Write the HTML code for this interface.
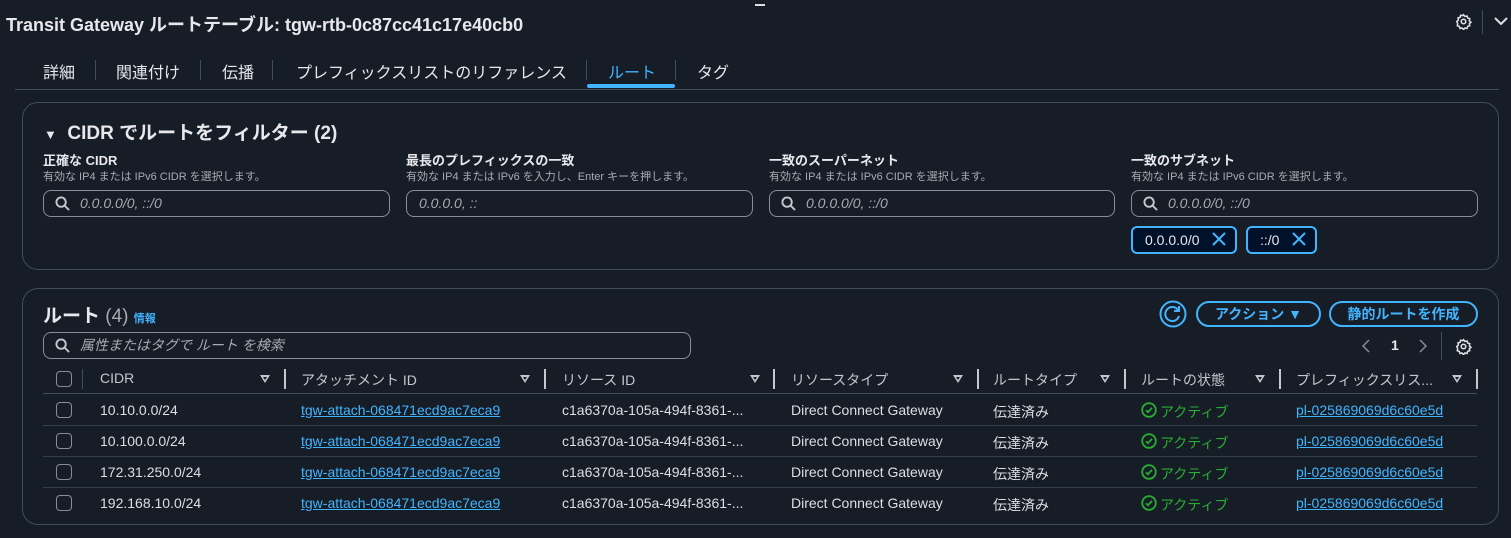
<!DOCTYPE html>
<html><head><meta charset="utf-8"><style>
*{box-sizing:border-box;margin:0;padding:0}
body{width:1511px;height:538px;background:#161d26;color:#dedee3;font-family:"Liberation Sans","Noto Sans CJK JP",sans-serif;font-size:14px;position:relative;overflow:hidden}
.a{position:absolute;white-space:nowrap}
.panel{position:absolute;border:1px solid #414d5c;border-radius:16px}
.inp{position:absolute;height:27px;border:1px solid #8c8c94;border-radius:8px;color:#a7abb2;font-style:italic;font-size:14px;line-height:25px}
.lbl{font-weight:bold;font-size:13px;color:#e8e8ec}
.sub{font-size:11px;color:#a7abb2}
.tab{font-size:16px;color:#e8e8ec}
.tsep{position:absolute;width:1px;height:20px;background:#414d5c;top:60px}
.hd{font-size:14px;color:#c6c6cd}
.hsep{position:absolute;top:369px;width:2px;height:20px;background:#c6c6cd}
.tri{position:absolute;top:375px;width:0;height:0;border-left:5px solid transparent;border-right:5px solid transparent;border-top:8px solid #c6c6cd}
.tri::after{content:"";position:absolute;left:-2px;top:-6px;border-left:2px solid transparent;border-right:2px solid transparent;border-top:3px solid #161d26}
.cb{position:absolute;left:56px;width:16px;height:16px;border:1.5px solid #8c8c94;border-radius:4px}
.row{position:absolute;left:43px;width:1434px;height:1px;background:#353f4c}
.lnk{color:#42b4ff;text-decoration:underline}
.grn{color:#29ad32}
.btn{position:absolute;height:26px;border:2px solid #42b4ff;border-radius:14px;color:#42b4ff;font-weight:bold;font-size:14px;line-height:22px;text-align:center}
.tok{position:absolute;top:226px;height:28px;border:2px solid #42b4ff;border-radius:6px;background:#001129;color:#e8e8ec;font-size:14px;line-height:24px;padding-left:12px}
</style></head><body>
<div class="a" style="left:6px;top:11px;font-size:18px;font-weight:bold;color:#e8e8ec">Transit Gateway ルートテーブル: tgw-rtb-0c87cc41c17e40cb0</div>
<div class="a" style="left:755px;top:4px;width:10px;height:2px;background:#dedee3"></div>
<svg class="a" style="left:1455px;top:13px" width="17" height="17" viewBox="0 0 24 24" fill="none" stroke="#dedee3" stroke-width="2.2"><circle cx="12" cy="12" r="3.2"/><path d="M12 2.5l2 2.3 3-.6.9 2.9 2.9.9-.6 3 2.3 2-2.3 2 .6 3-2.9.9-.9 2.9-3-.6-2 2.3-2-2.3-3 .6-.9-2.9-2.9-.9.6-3L2.5 12l2.3-2-.6-3 2.9-.9.9-2.9 3 .6z"/></svg>
<div class="a" style="left:1482px;top:10px;width:1px;height:24px;background:#414d5c"></div>
<svg class="a" style="left:1494px;top:16px" width="14" height="10" viewBox="0 0 14 10" fill="none" stroke="#dedee3" stroke-width="2"><path d="M1 2l6 6 6-6"/></svg>

<div class="a tab" style="left:43px;top:59px">詳細</div>
<div class="tsep" style="left:95px"></div>
<div class="a tab" style="left:116px;top:59px">関連付け</div>
<div class="tsep" style="left:200px"></div>
<div class="a tab" style="left:222px;top:59px">伝播</div>
<div class="tsep" style="left:272px"></div>
<div class="a tab" style="left:296px;top:59px">プレフィックスリストのリファレンス</div>
<div class="tsep" style="left:586px"></div>
<div class="a tab" style="left:608px;top:59px;color:#42b4ff">ルート</div>
<div class="a" style="left:587px;top:84px;width:88px;height:4px;border-radius:2px;background:#42b4ff"></div>
<div class="tsep" style="left:675px"></div>
<div class="a tab" style="left:697px;top:59px">タグ</div>
<div class="a" style="left:15px;top:89px;width:1484px;height:1px;background:#414d5c"></div>

<div class="panel" style="left:22px;top:102px;width:1477px;height:168px"></div>
<div class="a" style="left:44px;top:118px;font-size:19px;font-weight:bold;color:#e8e8ec"><span style="font-size:13px">▼</span>&nbsp; CIDR でルートをフィルター (2)</div>

<div class="a lbl" style="left:43px;top:150px">正確な CIDR</div>
<div class="a sub" style="left:43px;top:168px">有効な IP4 または IPv6 CIDR を選択します。</div>
<div class="inp" style="left:43px;top:190px;width:347px;padding-left:36px">0.0.0.0/0, ::/0</div>
<div class="a lbl" style="left:406px;top:150px">最長のプレフィックスの一致</div>
<div class="a sub" style="left:406px;top:168px">有効な IP4 または IPv6 を入力し、Enter キーを押します。</div>
<div class="inp" style="left:406px;top:190px;width:347px;padding-left:12px">0.0.0.0, ::</div>
<div class="a lbl" style="left:769px;top:150px">一致のスーパーネット</div>
<div class="a sub" style="left:769px;top:168px">有効な IP4 または IPv6 CIDR を選択します。</div>
<div class="inp" style="left:769px;top:190px;width:346px;padding-left:36px">0.0.0.0/0, ::/0</div>
<div class="a lbl" style="left:1131px;top:150px">一致のサブネット</div>
<div class="a sub" style="left:1131px;top:168px">有効な IP4 または IPv6 CIDR を選択します。</div>
<div class="inp" style="left:1131px;top:190px;width:347px;padding-left:36px">0.0.0.0/0, ::/0</div>
<svg class="a" style="left:55px;top:196px" width="15" height="15" viewBox="0 0 16 16" fill="none" stroke="#c6c6cd" stroke-width="2"><circle cx="6.5" cy="6.5" r="5"/><path d="M10 10l5 5"/></svg>
<svg class="a" style="left:781px;top:196px" width="15" height="15" viewBox="0 0 16 16" fill="none" stroke="#c6c6cd" stroke-width="2"><circle cx="6.5" cy="6.5" r="5"/><path d="M10 10l5 5"/></svg>
<svg class="a" style="left:1143px;top:196px" width="15" height="15" viewBox="0 0 16 16" fill="none" stroke="#c6c6cd" stroke-width="2"><circle cx="6.5" cy="6.5" r="5"/><path d="M10 10l5 5"/></svg>
<div class="tok" style="left:1131px;width:106px">0.0.0.0/0</div>
<svg class="a" style="left:1212px;top:232px" width="14" height="14" viewBox="0 0 14 14" stroke="#42b4ff" stroke-width="2"><path d="M1 1l12 12M13 1L1 13"/></svg>
<div class="tok" style="left:1246px;width:71px">::/0</div>
<svg class="a" style="left:1292px;top:232px" width="14" height="14" viewBox="0 0 14 14" stroke="#42b4ff" stroke-width="2"><path d="M1 1l12 12M13 1L1 13"/></svg>

<div class="panel" style="left:22px;top:288px;width:1477px;height:237px"></div>
<div class="a" style="left:43px;top:301px;font-size:19px;font-weight:bold;color:#e8e8ec">ルート <span style="font-weight:normal;color:#a7abb2">(4)</span> <span style="font-size:11px;color:#42b4ff">情報</span></div>
<svg class="a" style="left:1159px;top:300px" width="28" height="28" viewBox="0 0 28 28" fill="none" stroke="#42b4ff" stroke-width="2"><circle cx="14" cy="14" r="12.5"/><path d="M19 10a7 7 0 1 0 1 6"/><path d="M20 6v5h-5"/></svg>
<div class="btn" style="left:1196px;top:301px;width:125px">アクション ▼</div>
<div class="btn" style="left:1329px;top:301px;width:149px">静的ルートを作成</div>
<div class="inp" style="left:43px;top:332px;width:648px;padding-left:36px">属性またはタグで ルート を検索</div>
<svg class="a" style="left:55px;top:338px" width="15" height="15" viewBox="0 0 16 16" fill="none" stroke="#c6c6cd" stroke-width="2"><circle cx="6.5" cy="6.5" r="5"/><path d="M10 10l5 5"/></svg>
<svg class="a" style="left:1362px;top:339px" width="9" height="14" viewBox="0 0 9 14" fill="none" stroke="#8c8c94" stroke-width="1.5"><path d="M7 1L1 7l6 6"/></svg>
<div class="a" style="left:1391px;top:337px;font-weight:bold;color:#e8e8ec">1</div>
<svg class="a" style="left:1418px;top:339px" width="9" height="14" viewBox="0 0 9 14" fill="none" stroke="#8c8c94" stroke-width="1.5"><path d="M2 1l6 6-6 6"/></svg>
<div class="a" style="left:1441px;top:332px;width:1px;height:28px;background:#414d5c"></div>
<svg class="a" style="left:1455px;top:338px" width="17" height="17" viewBox="0 0 24 24" fill="none" stroke="#dedee3" stroke-width="2.2"><circle cx="12" cy="12" r="3.2"/><path d="M12 2.5l2 2.3 3-.6.9 2.9 2.9.9-.6 3 2.3 2-2.3 2 .6 3-2.9.9-.9 2.9-3-.6-2 2.3-2-2.3-3 .6-.9-2.9-2.9-.9.6-3L2.5 12l2.3-2-.6-3 2.9-.9.9-2.9 3 .6z"/></svg>

<div class="cb" style="top:371px"></div>
<div class="a" style="left:82px;top:369px;width:1px;height:20px;background:#414d5c"></div>
<div class="a hd" style="left:100px;top:370px">CIDR</div><div class="tri" style="left:260px"></div><div class="hsep" style="left:284px"></div>
<div class="a hd" style="left:301px;top:370px">アタッチメント ID</div><div class="tri" style="left:520px"></div><div class="hsep" style="left:544px"></div>
<div class="a hd" style="left:562px;top:370px">リソース ID</div><div class="tri" style="left:750px"></div><div class="hsep" style="left:773px"></div>
<div class="a hd" style="left:791px;top:370px">リソースタイプ</div><div class="tri" style="left:953px"></div><div class="hsep" style="left:977px"></div>
<div class="a hd" style="left:993px;top:370px">ルートタイプ</div><div class="tri" style="left:1100px"></div><div class="hsep" style="left:1124px"></div>
<div class="a hd" style="left:1141px;top:370px">ルートの状態</div><div class="tri" style="left:1255px"></div><div class="hsep" style="left:1279px"></div>
<div class="a hd" style="left:1296px;top:370px">プレフィックスリス...</div><div class="tri" style="left:1452px"></div><div class="hsep" style="left:1476px"></div>
<div class="row" style="top:393px;background:#414d5c"></div>

<div class="cb" style="top:402px"></div><div class="a" style="left:100px;top:402px">10.10.0.0/24</div><div class="a lnk" style="left:301px;top:402px">tgw-attach-068471ecd9ac7eca9</div><div class="a" style="left:562px;top:402px">c1a6370a-105a-494f-8361-...</div><div class="a" style="left:791px;top:402px">Direct Connect Gateway</div><div class="a" style="left:993px;top:402px">伝達済み</div><div class="a grn" style="left:1160px;top:402px">アクティブ</div><div class="a lnk" style="left:1296px;top:402px">pl-025869069d6c60e5d</div>
<div class="row" style="top:425px"></div>
<div class="cb" style="top:433px"></div><div class="a" style="left:100px;top:433px">10.100.0.0/24</div><div class="a lnk" style="left:301px;top:433px">tgw-attach-068471ecd9ac7eca9</div><div class="a" style="left:562px;top:433px">c1a6370a-105a-494f-8361-...</div><div class="a" style="left:791px;top:433px">Direct Connect Gateway</div><div class="a" style="left:993px;top:433px">伝達済み</div><div class="a grn" style="left:1160px;top:433px">アクティブ</div><div class="a lnk" style="left:1296px;top:433px">pl-025869069d6c60e5d</div>
<div class="row" style="top:456px"></div>
<div class="cb" style="top:464px"></div><div class="a" style="left:100px;top:464px">172.31.250.0/24</div><div class="a lnk" style="left:301px;top:464px">tgw-attach-068471ecd9ac7eca9</div><div class="a" style="left:562px;top:464px">c1a6370a-105a-494f-8361-...</div><div class="a" style="left:791px;top:464px">Direct Connect Gateway</div><div class="a" style="left:993px;top:464px">伝達済み</div><div class="a grn" style="left:1160px;top:464px">アクティブ</div><div class="a lnk" style="left:1296px;top:464px">pl-025869069d6c60e5d</div>
<div class="row" style="top:487px"></div>
<div class="cb" style="top:495px"></div><div class="a" style="left:100px;top:495px">192.168.10.0/24</div><div class="a lnk" style="left:301px;top:495px">tgw-attach-068471ecd9ac7eca9</div><div class="a" style="left:562px;top:495px">c1a6370a-105a-494f-8361-...</div><div class="a" style="left:791px;top:495px">Direct Connect Gateway</div><div class="a" style="left:993px;top:495px">伝達済み</div><div class="a grn" style="left:1160px;top:495px">アクティブ</div><div class="a lnk" style="left:1296px;top:495px">pl-025869069d6c60e5d</div>

<svg class="a" style="left:1141px;top:402px" width="16" height="16" viewBox="0 0 16 16" fill="none" stroke="#29ad32" stroke-width="1.8"><circle cx="8" cy="8" r="6.8"/><path d="M5 8.2l2 2 4-4.4"/></svg>
<svg class="a" style="left:1141px;top:433px" width="16" height="16" viewBox="0 0 16 16" fill="none" stroke="#29ad32" stroke-width="1.8"><circle cx="8" cy="8" r="6.8"/><path d="M5 8.2l2 2 4-4.4"/></svg>
<svg class="a" style="left:1141px;top:464px" width="16" height="16" viewBox="0 0 16 16" fill="none" stroke="#29ad32" stroke-width="1.8"><circle cx="8" cy="8" r="6.8"/><path d="M5 8.2l2 2 4-4.4"/></svg>
<svg class="a" style="left:1141px;top:495px" width="16" height="16" viewBox="0 0 16 16" fill="none" stroke="#29ad32" stroke-width="1.8"><circle cx="8" cy="8" r="6.8"/><path d="M5 8.2l2 2 4-4.4"/></svg>
</body></html>
